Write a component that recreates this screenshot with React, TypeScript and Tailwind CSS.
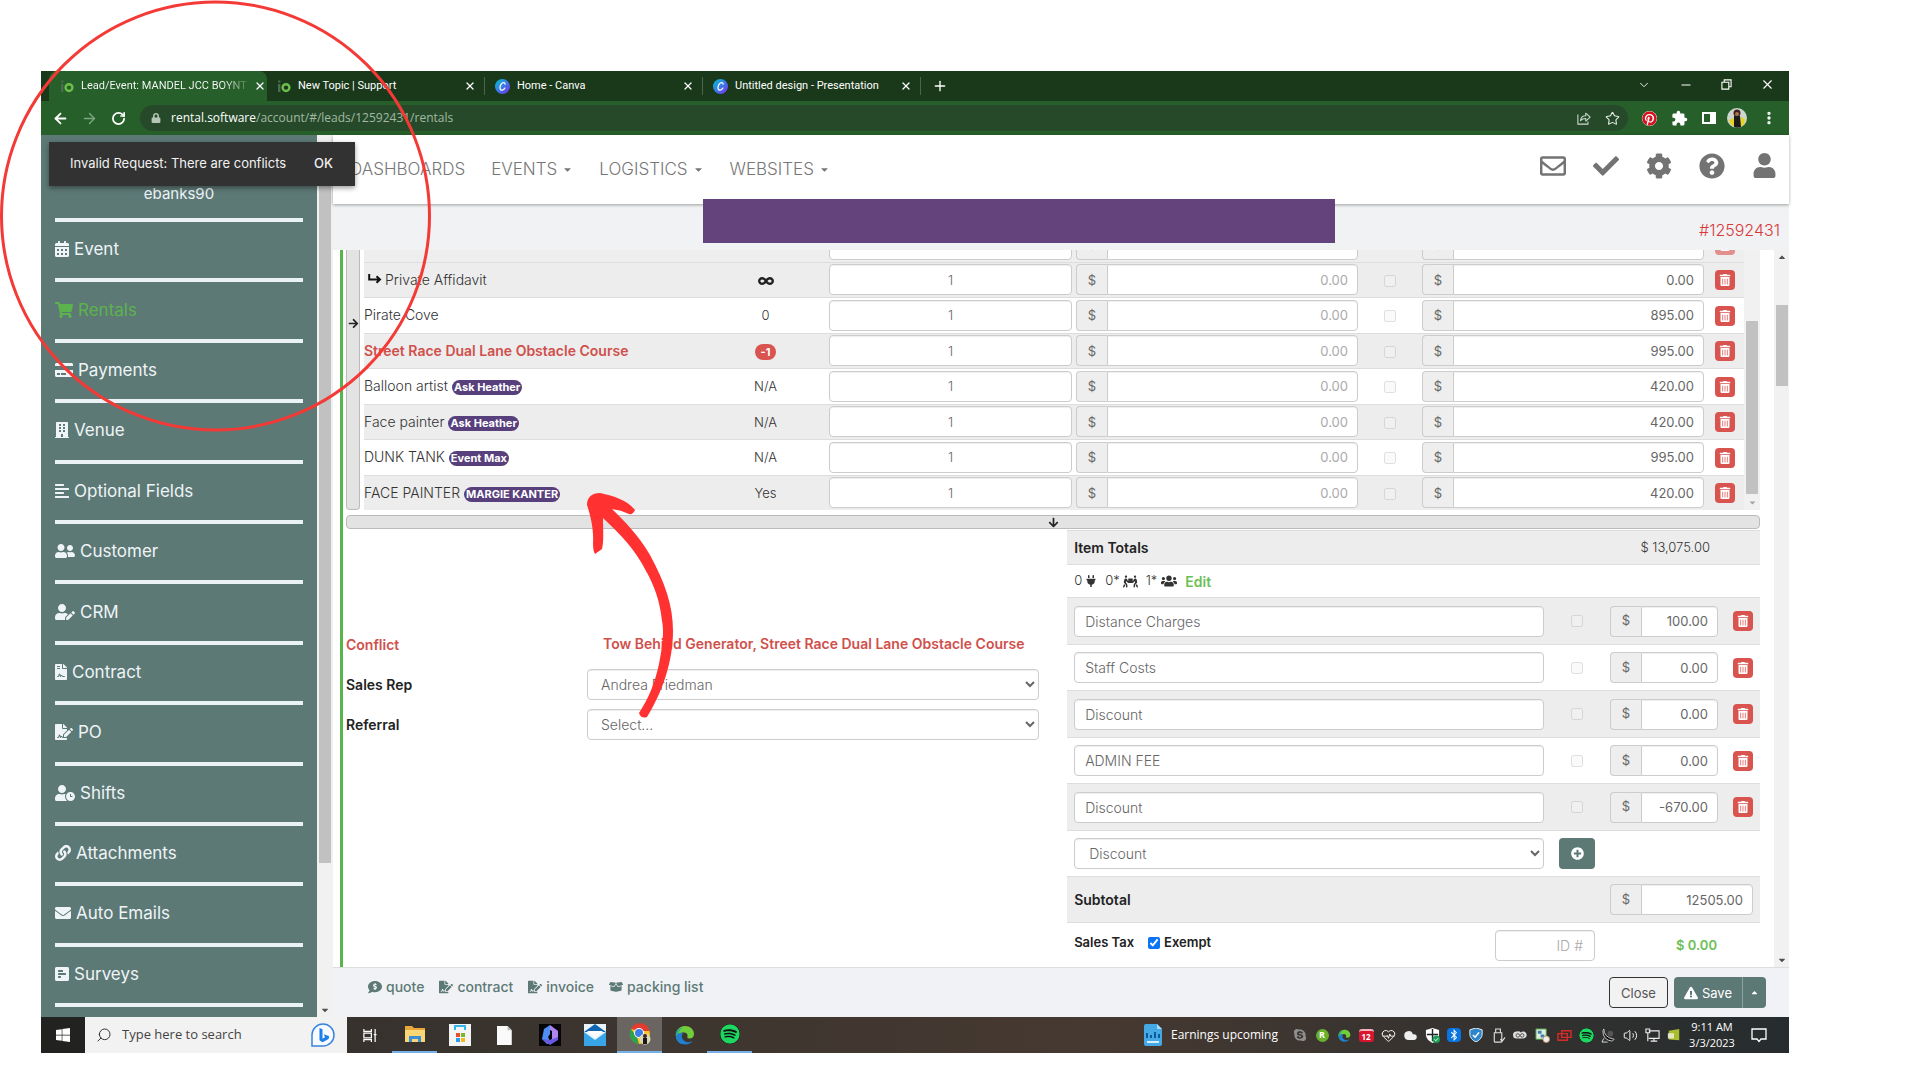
import React from "react";
import {
  FaAlignLeft, FaArrowDown, FaArrowRight, FaBoxOpen, FaBuilding, FaCalendarAlt, FaCaretDown, FaCaretUp, FaCheck, FaCog,
  FaCommentDollar, FaCreditCard, FaEnvelope, FaExclamationTriangle, FaFileContract, FaFileSignature, FaInfinity, FaLink,
  FaPeopleCarry, FaPlug, FaPlusCircle, FaPollH, FaPuzzlePiece, FaQuestionCircle, FaRegEnvelope, FaShoppingCart,
  FaSpotify, FaTrashAlt, FaUser, FaUserClock, FaUserEdit, FaUserFriends, FaUsers, FaPinterest, FaSkype, FaBluetoothB,
  FaWindows, FaLock,
} from "react-icons/fa";
import { ArrowLeft, ArrowRight, RotateCw, Search, Star, X, Plus, Minus, ChevronDown, EllipsisVertical, HeartPulse, Cloud, Volume2 } from "lucide-react";

const field = "h-[31px] w-full min-w-0 border border-[#ccc] bg-white text-[#666] shadow-[inset_0_1px_1px_rgba(0,0,0,0.07)] outline-none placeholder:text-[#aaa]";

/* ---------- browser chrome ---------- */

function IoLogo() {
  return (
    <svg viewBox="0 0 14 14" className="size-[14px] shrink-0">
      <rect x="1" y="5" width="2.4" height="8" fill="#4d6b50" />
      <rect x="1" y="1.5" width="2.4" height="2" fill="#4d6b50" />
      <circle cx="9" cy="8.6" r="3.4" fill="none" stroke="#6cc04a" strokeWidth="2.4" />
    </svg>
  );
}

function CanvaLogo() {
  return (
    <svg viewBox="0 0 16 16" className="size-[15px] shrink-0">
      <defs>
        <linearGradient id="canva" x1="0" y1="0" x2="1" y2="1">
          <stop offset="0" stopColor="#00c4cc" />
          <stop offset="0.5" stopColor="#3a7be8" />
          <stop offset="1" stopColor="#7d2ae8" />
        </linearGradient>
      </defs>
      <circle cx="8" cy="8" r="8" fill="url(#canva)" />
      <path d="M10.8 5.6c0-1-.6-1.7-1.6-1.7C7 3.900 5.300 6.800 5.300 9.200c0 1.700.9 2.700 2.200 2.700 1.400 0 2.500-1 3.100-2.200" fill="none" stroke="#fff" strokeWidth="1.300" strokeLinecap="round" />
    </svg>
  );
}

const tabs = [
  { title: "Lead/Event: MANDEL JCC BOYNT", icon: <IoLogo />, active: true },
  { title: "New Topic | Support", icon: <IoLogo /> },
  { title: "Home - Canva", icon: <CanvaLogo /> },
  { title: "Untitled design - Presentation", icon: <CanvaLogo /> },
];

function Browser() {
  return (
    <header className="shrink-0 font-['Open_Sans',sans-serif] text-white">
      <div className="flex h-[30px] items-stretch bg-[#1a391b] pl-[8px]">
        {tabs.map((t) => (
          <div
            key={t.title}
            className={
              t.active
                ? "flex w-[218px] items-center gap-[7px] rounded-t-lg bg-[#265f2a] pr-[8px] pl-[11px]"
                : "my-[6px] flex w-[218px] items-center gap-[7px] border-r border-[#4b654c] pr-[8px] pl-[10px]"
            }
          >
            {t.icon}
            <span className={"flex-1 font-[Roboto,sans-serif] text-[11px] whitespace-nowrap " + (t.active ? "bg-linear-to-r from-white from-85% to-[#4e7f51] bg-clip-text text-transparent" : "")}>{t.title}</span>
            <button aria-label={"Close " + t.title}><X size={12} strokeWidth={2.500} /></button>
          </div>
        ))}
        <button aria-label="New tab" className="ml-[11px]"><Plus size={16} /></button>
        <div className="ml-auto flex items-center gap-[28px] pr-[14px] pb-[3px]">
          <button aria-label="Search tabs"><ChevronDown size={14} strokeWidth={1.500} /></button>
          <button aria-label="Minimize"><Minus size={14} strokeWidth={2} /></button>
          <button aria-label="Restore">
            <svg viewBox="0 0 12 12" className="size-[11px]"><path d="M1 3.500h7.500V11H1zM3.500 3.500V1H11v7.500H8.500" fill="none" stroke="#fff" strokeWidth="1.200" /></svg>
          </button>
          <button aria-label="Close window"><X size={15} strokeWidth={1.750} /></button>
        </div>
      </div>
      <div className="flex h-[34px] items-center bg-[#265f2a] pr-[12px] pl-[11px]">
        <button aria-label="Back"><ArrowLeft size={17} strokeWidth={2.500} /></button>
        <button aria-label="Forward" className="ml-[12px] text-[#7ea480]"><ArrowRight size={17} strokeWidth={2} /></button>
        <button aria-label="Reload" className="ml-[13px]"><RotateCw size={15} strokeWidth={2.750} /></button>
        <div className="ml-[14px] flex h-[26px] flex-1 items-center rounded-full bg-[#264a29] pr-[8px] pl-[11px] text-[12px]">
          <FaLock size={10} className="text-[#b5c5b6]" />
          <span className="ml-[10px]">rental.software<span className="text-[#a3b8a4]">/account/#/leads/12592431/rentals</span></span>
          <svg viewBox="0 0 16 16" className="ml-auto size-[14px]">
            <path d="M1 4v11h11.500v-3M4 11c.5-4 3-5.500 6-5.500V2.500L15 7l-5 4.500v-3C7.500 8.500 5.500 9 4 11z" fill="none" stroke="#cfdacf" strokeWidth="1.200" strokeLinejoin="round" />
          </svg>
          <Star size={15} strokeWidth={1.750} className="ml-[14px] text-[#e4ece4]" />
        </div>
        <div className="ml-[14px] flex items-center gap-[14px]">
          <FaPinterest size={15} className="rounded-full bg-white text-[#d5121f]" />
          <svg viewBox="0 0 24 24" className="size-[17px]">
            <path d="M20.500 11H19V7a2 2 0 0 0-2-2h-4V3.500a2.500 2.500 0 0 0-5 0V5H4a2 2 0 0 0-2 2v3.800h1.500a2.700 2.700 0 0 1 0 5.400H2V20a2 2 0 0 0 2 2h3.800v-1.500a2.700 2.700 0 0 1 5.400 0V22H17a2 2 0 0 0 2-2v-4h1.500a2.500 2.500 0 0 0 0-5z" fill="#fff" />
          </svg>
          <svg viewBox="0 0 14 14" className="size-[14px]"><path d="M0 1h14v12H0zM2 3v8h6V3z" fill="#fff" fillRule="evenodd" /></svg>
          <svg viewBox="0 0 20 20" className="-ml-[3px] size-[20px]">
            <circle cx="10" cy="10" r="10" fill="#cfd6d0" />
            <path d="M2 12l5-2 3 9c-4 0-7-3-8-7zM14 9l4 2c0 4-2 7-5 8z" fill="#e6d41f" />
            <path d="M7 8h6l1 11c-3 1-5 1-7 0z" fill="#1c1a1a" />
            <circle cx="10" cy="5" r="3.500" fill="#3b2119" />
            <circle cx="10" cy="6" r="2" fill="#b0704f" />
          </svg>
          <button aria-label="Menu"><EllipsisVertical size={16} strokeWidth={3} /></button>
        </div>
      </div>
    </header>
  );
}

/* ---------- sidebar ---------- */

const menu = [
  { label: "Event", Icon: FaCalendarAlt, size: "w-[14px]" },
  { label: "Rentals", Icon: FaShoppingCart, size: "w-[18px]", active: true },
  { label: "Payments", Icon: FaCreditCard, size: "w-[18px]" },
  { label: "Venue", Icon: FaBuilding, size: "w-[14px]" },
  { label: "Optional Fields", Icon: FaAlignLeft, size: "w-[14px]" },
  { label: "Customer", Icon: FaUserFriends, size: "w-[20px]" },
  { label: "CRM", Icon: FaUserEdit, size: "w-[20px]" },
  { label: "Contract", Icon: FaFileContract, size: "w-[12px]" },
  { label: "PO", Icon: FaFileSignature, size: "w-[18px]" },
  { label: "Shifts", Icon: FaUserClock, size: "w-[20px]" },
  { label: "Attachments", Icon: FaLink, size: "w-[16px]" },
  { label: "Auto Emails", Icon: FaEnvelope, size: "w-[16px]" },
  { label: "Surveys", Icon: FaPollH, size: "w-[14px]" },
];

function Sidebar() {
  return (
    <aside className="flex w-[292px] shrink-0 bg-[#5d7975] text-[#eef4f7]">
      <div className="flex flex-1 flex-col px-[14px] pb-[10px]">
        <div className="flex h-[87px] items-end justify-center border-b-4 border-[#eaf2f6] pb-[14px] text-[15px] leading-[20px]">ebanks90</div>
        <nav className="flex flex-1 flex-col">
          {menu.map(({ label, Icon, size, active }) => (
            <a
              key={label}
              href={"#" + label}
              className={
                "flex flex-1 items-center gap-[5px] border-b-4 border-[#eaf2f6] pb-[2px] text-[17px] leading-[20px] " + (active ? "text-[#5cb34d]" : "")
              }
            >
              <Icon className={"h-[18px] shrink-0 " + size} />
              {label}
            </a>
          ))}
        </nav>
      </div>
      <div className="flex w-[16px] flex-col items-center bg-[#f1f1f1] pt-[17px] text-[#505050]">
        <div className="w-[12px] flex-[708] bg-[#c1c1c1]" />
        <div className="flex-[142]" />
        <FaCaretDown size={10} className="mb-[2px]" />
      </div>
    </aside>
  );
}

/* ---------- rentals ---------- */

function TrashButton() {
  return (
    <button aria-label="Remove" className="inline-flex size-[20px] items-center justify-center rounded-[4px] bg-[#d9534f] align-middle text-white">
      <FaTrashAlt size={12} />
    </button>
  );
}

function Money({ label, value, placeholder }: { label: string; value?: string; placeholder?: string }) {
  return (
    <div className="flex w-full">
      <span className="flex h-[31px] w-[31px] shrink-0 items-center justify-center rounded-l-[4px] border border-r-0 border-[#ccc] bg-[#eee] text-[13px] text-[#666]">$</span>
      <input aria-label={label} defaultValue={value} placeholder={placeholder} className={field + " rounded-r-[4px] px-[9px] text-right text-[13px]"} />
    </div>
  );
}

const rentals = [
  { name: "", avail: "" },
  { name: "Private Affidavit", avail: "inf", total: "0.00", child: true },
  { name: "Pirate Cove", avail: "0", total: "895.00" },
  { name: "Street Race Dual Lane Obstacle Course", avail: "-1", total: "995.00", conflict: true },
  { name: "Balloon artist", tag: "Ask Heather", avail: "N/A", total: "420.00" },
  { name: "Face painter", tag: "Ask Heather", avail: "N/A", total: "420.00" },
  { name: "DUNK TANK", tag: "Event Max", avail: "N/A", total: "995.00" },
  { name: "FACE PAINTER", tag: "MARGIE KANTER", avail: "Yes", total: "420.00" },
];

function RentalTable() {
  return (
    <div className="flex h-[260px] gap-[4px]">
      <div className="flex w-[14px] items-center justify-center rounded-b-[4px] border border-t-0 border-[#bbb] bg-[#e3e3e3] pb-[113px] text-[#222]">
        <FaArrowRight size={11} className="shrink-0" />
      </div>
      <div className="flex min-w-0 flex-1 flex-col justify-end overflow-hidden">
        <table className="h-[284px] w-full shrink-0 table-fixed border-collapse text-[14px] leading-[20px] text-[#333]">
          <colgroup>
            <col />
            <col className="w-[119px]" />
            <col className="w-[247px]" />
            <col className="w-[286px]" />
            <col className="w-[60px]" />
            <col className="w-[286px]" />
            <col className="w-[38px]" />
          </colgroup>
          <tbody>
            {rentals.map((r, i) => (
              <tr key={r.name + i} className={"border-t border-[#ddd] " + (i === 0 ? "bg-[#eee] [&_button]:opacity-60" : i % 2 ? "bg-[#ededed]" : "bg-white")}>
                <td className={r.conflict ? "p-0 font-semibold whitespace-nowrap text-[#d0504c]" : "p-0 font-light whitespace-nowrap"}>
                  {r.child && (
                    <svg viewBox="0 0 14 10" className="mr-[3px] ml-[4px] inline h-[10px] w-[14px] align-[1px]">
                      <path d="M1.200 0v5.500h10.500M8.500 2.200l3.500 3.300-3.500 3.300" fill="none" stroke="#111" strokeWidth="2" />
                    </svg>
                  )}
                  {r.name}
                  {r.tag && (
                    <span className="ml-[4px] inline-block rounded-full bg-[#58407c] px-[2px] text-[11px] leading-[15px] font-bold text-white">{r.tag}</span>
                  )}
                </td>
                <td className="py-0 pr-[4px] pl-0 text-center text-[13px] font-light">
                  {r.avail === "inf" ? (
                    <FaInfinity size={16} className="inline text-[#222]" />
                  ) : r.conflict ? (
                    <span className="inline-block rounded-full bg-[#d9534f] px-[6px] text-[11px] leading-[16px] font-bold text-white">{r.avail}</span>
                  ) : (
                    r.avail
                  )}
                </td>
                <td className="px-[2px] py-0"><input aria-label="Quantity" defaultValue={i > 0 ? "1" : ""} className={field + " block rounded-[4px] text-center text-[13px] font-light"} /></td>
                <td className="px-[2px] py-0"><Money label="Override" placeholder={i > 0 ? "0.00" : ""} /></td>
                <td className="p-0 text-center">{i > 0 && <input type="checkbox" disabled aria-label="Lock price" className="size-[12px] align-middle opacity-70" />}</td>
                <td className="px-[2px] py-0"><Money label="Total" value={r.total} /></td>
                <td className="p-0 text-center"><TrashButton /></td>
              </tr>
            ))}
          </tbody>
        </table>
      </div>
      <div className="-ml-[4px] flex w-[16px] flex-col items-center bg-[#f1f1f1] pt-[71px] text-[#a3a3a3]">
        <div className="w-[12px] flex-1 bg-[#c1c1c1]" />
        <FaCaretDown size={9} className="mt-[4px] mb-[3px]" />
      </div>
    </div>
  );
}

const fees = [
  { name: "Distance Charges", amount: "100.00" },
  { name: "Staff Costs", amount: "0.00" },
  { name: "Discount", amount: "0.00" },
  { name: "ADMIN FEE", amount: "0.00" },
  { name: "Discount", amount: "-670.00" },
];

function Totals() {
  return (
    <section className="text-[14px] text-[#333]">
      <div className="flex h-[35px] items-center justify-between border-y border-[#ddd] bg-[#ededed] pr-[50px] pl-[7px]">
        <b className="font-semibold text-[#222]">Item Totals</b>
        <span className="text-[13px] font-light">$ 13,075.00</span>
      </div>
      <div className="flex h-[32px] items-center gap-[8px] pl-[7px] text-[13px] font-light">
        <span className="flex items-center gap-[3px]">0<FaPlug size={12} /></span>
        <span className="flex items-center gap-[3px]">0*<FaPeopleCarry size={15} /></span>
        <span className="flex items-center gap-[4px]">1*<FaUsers size={16} /></span>
        <a href="#edit" className="text-[14px] font-semibold text-[#6cbf56]">Edit</a>
      </div>
      {fees.map((f, i) => (
        <div key={i} className={"flex items-center border-t border-[#ddd] px-[7px] " + (i % 2 ? "h-[46px]" : "h-[47px] bg-[#ededed]")}>
          <input aria-label="Charge name" defaultValue={f.name} className={field + " flex-1 rounded-[4px] px-[10px] text-[14px] font-light"} />
          <div className="flex w-[66px] justify-center">
            <input type="checkbox" disabled aria-label="Taxable" className="size-[12px] opacity-70" />
          </div>
          <div className="w-[108px]"><Money label="Amount" value={f.amount} /></div>
          <div className="flex w-[35px] justify-end"><TrashButton /></div>
        </div>
      ))}
      <div className="flex h-[46px] items-center border-t border-[#ddd] pr-[165px] pl-[7px]">
        <select aria-label="Charge type" className={field + " flex-1 rounded-[4px] px-[10px] text-[14px] font-light"}>
          <option>Discount</option>
        </select>
        <button aria-label="Add charge" className="ml-[15px] flex h-[31px] w-[36px] items-center justify-center rounded-[4px] bg-[#5d7975] text-white">
          <FaPlusCircle size={13} />
        </button>
      </div>
      <div className="flex h-[47px] items-center justify-between border-y border-[#ddd] bg-[#ededed] px-[7px]">
        <b className="font-semibold text-[#222]">Subtotal</b>
        <div className="w-[143px]"><Money label="Subtotal" value="12505.00" /></div>
      </div>
      <div className="flex items-center pt-[7px] pl-[7px] font-semibold text-[#222]">
        <div className="flex items-center gap-[14px] pb-[5px] text-[13px]">
          Sales Tax
          <label className="flex items-center gap-[4px]">
            <input type="checkbox" defaultChecked className="size-[12px] accent-[#0b73f5]" />
            Exempt
          </label>
        </div>
        <input aria-label="Tax ID" placeholder="ID #" className={field + " ml-auto max-w-[100px] rounded-[4px] px-[11px] text-right font-light"} />
        <span className="w-[165px] pr-[43px] text-right text-[13px] text-[#6cbf56]">$ 0.00</span>
      </div>
    </section>
  );
}

function Details() {
  const row = "flex h-[30px] items-center";
  const label = "w-[241px] shrink-0 pt-[2px] font-semibold";
  return (
    <section className="flex flex-col gap-[10px] pt-[99px] pr-[28px] text-[14px] leading-[20px] text-[#222]">
      <div className={row + " text-[#d0504c]"}>
        <span className={label}>Conflict</span>
        <span className="pl-[16px] font-semibold whitespace-nowrap">Tow Behind Generator, Street Race Dual Lane Obstacle Course</span>
      </div>
      <div className={row}>
        <label htmlFor="rep" className={label}>Sales Rep</label>
        <select id="rep" className={field + " rounded-[4px] px-[9px] font-light"}><option>Andrea Friedman</option></select>
      </div>
      <div className={row}>
        <label htmlFor="referral" className={label}>Referral</label>
        <select id="referral" className={field + " rounded-[4px] px-[9px] font-light"}><option>Select...</option></select>
      </div>
    </section>
  );
}

function Main() {
  const docs = [
    { label: "quote", Icon: FaCommentDollar },
    { label: "contract", Icon: FaFileSignature },
    { label: "invoice", Icon: FaFileSignature },
    { label: "packing list", Icon: FaBoxOpen },
  ];
  return (
    <div className="flex min-w-0 flex-1 flex-col bg-white">
      <div className="relative z-10 flex h-[69px] shrink-0 items-center bg-white pr-[12px] pl-[17px] text-[17px] font-light text-[#777] shadow-[0_1px_3px_rgba(0,0,0,0.35)]">
        <nav className="flex gap-[26px]">
          <a href="#dashboards">DASHBOARDS</a>
          {["EVENTS", "LOGISTICS", "WEBSITES"].map((n) => (
            <a key={n} href={"#" + n} className="flex items-center gap-[5px]">{n}<FaCaretDown size={11} /></a>
          ))}
        </nav>
        <div className="ml-auto flex items-center gap-[27px] pb-[8px] text-[#737373]">
          <FaRegEnvelope size={26} /><FaCheck size={26} /><FaCog size={26} /><FaQuestionCircle size={26} /><FaUser size={25} />
        </div>
      </div>
      <div className="relative flex h-[46px] shrink-0 items-center justify-end bg-[#f0f2f4] pt-[5px] pr-[9px] text-[16px] font-light text-[#d83a3a]">
        <div className="absolute -top-[5px] left-[370px] z-20 h-[44px] w-[632px] bg-[#64437c]" />
        #12592431
      </div>
      <div className="flex min-h-0 flex-1">
        <div className="ml-[7px] flex min-w-0 flex-1 flex-col overflow-hidden border-l-[3px] border-[#58b54c] pr-[14px] pl-[3px]">
          <RentalTable />
          <div className="mt-[5px] flex h-[14px] shrink-0 items-center justify-center rounded-[4px] border border-[#bbb] bg-[#e3e3e3] text-[#222]">
            <FaArrowDown size={11} />
          </div>
          <div className="mt-[1px] grid grid-cols-[51fr_49fr]">
            <Details />
            <Totals />
          </div>
        </div>
        <div className="flex w-[15px] flex-col items-center bg-[#f1f1f1] pt-[2px] text-[#505050]">
          <FaCaretUp size={10} />
          <div className="mt-[43px] h-[81px] w-[12px] bg-[#c1c1c1]" />
          <FaCaretDown size={10} className="mt-auto mb-[2px]" />
        </div>
      </div>
      <footer className="flex h-[50px] shrink-0 items-start border-t border-[#ddd] bg-[#f0f2f5] pt-[9px] pr-[23px] pl-[35px] text-[14px] leading-[20px]">
        <div className="flex gap-[15px] font-medium text-[#5d7975]">
          {docs.map(({ label, Icon }) => (
            <a key={label} href={"#" + label} className="flex items-center gap-[4px]"><Icon size={14} />{label}</a>
          ))}
        </div>
        <button className="ml-auto h-[31px] rounded-[4px] border border-[#333] bg-[#f2f2f2] px-[11px] text-[13px] text-[#555]">Close</button>
        <div className="ml-[6px] flex h-[31px] rounded-[4px] bg-[#5d7975] text-[13px] text-white">
          <button className="flex items-center gap-[4px] border-r border-[#8ea39f] px-[10px]"><FaExclamationTriangle size={14} />Save</button>
          <button aria-label="More save options" className="px-[7px]"><FaCaretUp size={9} /></button>
        </div>
      </footer>
    </div>
  );
}

/* ---------- taskbar ---------- */

function EdgeLogo({ className }: { className: string }) {
  return (
    <svg viewBox="0 0 20 20" className={className}>
      <path d="M1 12C0 6 4 1 10 1c5 0 9 3.500 9 8 0 3-2 4.500-4.500 4.500-2 0-2.500-1-2-2C13 9.500 11.500 7.500 9 7.500 5.500 7.500 2 9 1 12z" fill="#6fce3a" />
      <path d="M1 12C0 6 4 2.500 8 3 5 4 3 7 3 11c0 4 3 7.500 7 8-5 .5-8.500-3-9-7z" fill="#2aa7a0" />
      <path d="M1 12c1-3 4.500-4.500 8-4.500-3 1.500-3 6 .5 8.500 2.500 1.800 6 1.500 8.500-.5-1.500 2.500-4.500 4-8 4-4.500 0-8.500-3-9-7.500z" fill="#1f7fd0" />
    </svg>
  );
}

function Taskbar() {
  const app = "flex h-full w-[45px] items-center justify-center";
  return (
    <footer className="flex h-[36px] shrink-0 items-center bg-gradient-to-r from-[#302f2c] via-[#463931] via-60% to-[#262c2e] font-['Open_Sans',sans-serif] text-[12px] text-white">
      <button aria-label="Start" className="flex h-full w-[44px] items-center justify-center bg-[#222220]"><FaWindows size={16} /></button>
      <label className="flex h-full w-[262px] items-center bg-[#f2f2f2] pr-[11px] pl-[11px] text-[#333]">
        <Search size={16} strokeWidth={1.500} className="-scale-x-100" />
        <input aria-label="Search" placeholder="Type here to search" className="ml-[10px] min-w-0 flex-1 text-[13px] outline-none placeholder:text-[#444]" />
        <svg viewBox="0 0 26 26" className="size-[26px]">
          <path d="M2 24V13A11 11 0 1 1 13 24z" fill="#f7fbff" stroke="#3a83dd" strokeWidth="1.500" />
          <path d="M9.500 6l3 1.200v9.500l2.500-1.500-1.200-3 5 1.800c1 2.500-1 3.500-2 4l-4.300 2.200-3-2z" fill="#1a7fe8" />
        </svg>
      </label>
      <div className="flex h-full">
        <div className={app}>
          <svg viewBox="0 0 16 16" className="size-[15px]"><path d="M2 1v2.500h8V1M2 15v-2.500h8V15M2 5.500h8v5H2zM14 1v14M12.500 7h3" fill="none" stroke="#fff" strokeWidth="1.300" /></svg>
        </div>
        <div className={app + " border-b-2 border-[#76b0e6]"}>
          <svg viewBox="0 0 20 18" className="w-[20px]"><path d="M0 1h7l2 2h11v14H0z" fill="#e8a83a" /><path d="M0 5h20v12H0z" fill="#fbd675" /><path d="M4 17v-6h12v6h-3v-3H7v3z" fill="#3b8ed6" /></svg>
        </div>
        <div className={app}>
          <svg viewBox="0 0 22 22" className="size-[22px]"><path d="M0 0h22v22H0z" fill="#f4f4f4" /><path d="M6 6V2h10v4" fill="none" stroke="#34b5e8" strokeWidth="2" /><path d="M7 9h4v4H7z" fill="#e8502c" /><path d="M12 9h4v4h-4z" fill="#7cb82f" /><path d="M7 14h4v4H7z" fill="#2c9be8" /><path d="M12 14h4v4h-4z" fill="#f8b71c" /></svg>
        </div>
        <div className={app}>
          <svg viewBox="0 0 14 18" className="h-[19px]"><path d="M0 0h10l4 4v14H0z" fill="#fafafa" /><path d="M10 0v4h4z" fill="#bbb" /></svg>
        </div>
        <div className={app}>
          <svg viewBox="0 0 22 22" className="size-[22px]"><path d="M0 0h22v22H0z" fill="#050509" /><path d="M5 5l6-4v9l-2 3 2 4-3 3-5-5z" fill="#4f8ff5" /><path d="M11 1l8 6v7l-8 6-4-1 6-4V7l-2-1z" fill="#b084f0" /><path d="M3 15l8 1 8-3v3l-8 5z" fill="#6a58e0" /></svg>
        </div>
        <div className={app}>
          <svg viewBox="0 0 22 22" className="size-[22px]"><path d="M0 0h22v22H0z" fill="#e8f3fb" /><path d="M0 8l11-8 11 8z" fill="#1066b0" /><path d="M0 8l11 8 11-8v14H0z" fill="#37a5e8" /><path d="M3 7h16l-8 7z" fill="#fff" /></svg>
        </div>
        <div className={app + " border-b-2 border-[#76b0e6] bg-[#6a6561]"}>
          <svg viewBox="0 0 22 22" className="size-[22px]"><circle cx="11" cy="11" r="10" fill="#f9c52a" /><path d="M2 6a10 10 0 0 1 18 0l.5 2H11z" fill="#e33b2e" /><path d="M2 6l6 8 2 7A10 10 0 0 1 2 6z" fill="#2da14c" /><circle cx="10" cy="10" r="5" fill="#fff" /><circle cx="10" cy="10" r="4" fill="#3c7ee8" /><circle cx="16" cy="16" r="5.500" fill="#d8d9b8" /><path d="M14 15h4v6h-4z" fill="#1b1717" /><circle cx="16" cy="13" r="2" fill="#3b2119" /></svg>
        </div>
        <div className={app}><EdgeLogo className="size-[20px]" /></div>
        <div className={app + " border-b-2 border-[#76b0e6]"}><FaSpotify size={20} className="rounded-full bg-[#111] text-[#1ed760]" /></div>
      </div>
      <div className="ml-auto flex items-center">
        <svg viewBox="0 0 18 22" className="mr-[9px] h-[22px]"><path d="M0 2q0-2 2-2h11l5 5v15q0 2-2 2H2q-2 0-2-2z" fill="#45a9e6" /><path d="M13 0v5h5z" fill="#a6dcfa" /><path d="M3 14V9m4 5v-3m4 3V8m4 6v-4" stroke="#0b5b9c" strokeWidth="2" /><path d="M3 18h12" stroke="#d7effc" strokeWidth="2" /></svg>
        <span className="mr-[11px]">Earnings upcoming</span>
      </div>
      <div className="grid grid-cols-[repeat(18,22px)] items-center [&>*]:mx-auto">
        <FaSkype size={14} className="text-[#8f8f8f]" />
        <span className="flex size-[13px] items-center justify-center rounded-full bg-[#69b02d] text-[9px] font-bold">R</span>
        <EdgeLogo className="size-[13px]" />
        <span className="flex h-[13px] w-[15px] items-end justify-center rounded-[3px] border-t-2 border-[#f3b5bd] bg-[#d8142f] text-[8px] leading-[11px] font-bold">12</span>
        <HeartPulse size={15} strokeWidth={1.500} />
        <Cloud size={15} fill="#eee" strokeWidth={0} />
        <svg viewBox="0 0 16 16" className="size-[15px]"><path d="M8 0l7 2v5c0 4-3 7-7 9-4-2-7-5-7-9V2z" fill="#fff" /><path d="M8 1v13M2 7h12" stroke="#222" strokeWidth="1.500" /><circle cx="12" cy="12" r="4" fill="#1fa05a" /><path d="M10 12l1.500 1.500L14 11" fill="none" stroke="#fff" /></svg>
        <FaBluetoothB size={14} className="rounded-[4px] bg-[#0a74e0] p-[1px]" />
        <svg viewBox="0 0 16 16" className="size-[14px]"><path d="M8 0l7 2v5c0 4-3 7-7 9-4-2-7-5-7-9V2z" fill="#2d86cc" stroke="#fff" /><path d="M4.500 8L7 10.500 11.500 5" fill="none" stroke="#fff" strokeWidth="1.800" /></svg>
        <svg viewBox="0 0 16 16" className="size-[15px]"><path d="M5 5V1h5v4M3.500 5h8v9q0 1-1 1h-6q-1 0-1-1zM10 12l2 2 3-4" fill="none" stroke="#ddd" strokeWidth="1.200" /></svg>
        <svg viewBox="0 0 16 16" className="size-[14px]"><path d="M4 4a4 4 0 0 0 0 8h8a4 4 0 1 0-3-7q-2-2-5-1z" fill="#ddd" /><circle cx="5.500" cy="8.500" r="2" fill="none" stroke="#444" /><circle cx="10.500" cy="8.500" r="2" fill="none" stroke="#444" /></svg>
        <svg viewBox="0 0 16 16" className="size-[15px]"><path d="M1 1h11v11H1z" fill="#dff0da" stroke="#4c9a42" /><path d="M3 3h4v3H3zM6 7h4v3H6z" fill="#3e7fb8" /><circle cx="12" cy="12" r="3.500" fill="#eee" stroke="#b98f66" /></svg>
        <svg viewBox="0 0 16 16" className="size-[15px]"><path d="M5 3h10v7H5zM1 6h10v7H1z" fill="#3a302b" stroke="#d62b2b" strokeWidth="1.500" /></svg>
        <FaSpotify size={15} className="rounded-full bg-[#111] text-[#1ed760]" />
        <svg viewBox="0 0 16 16" className="size-[15px]"><path d="M3 1q0 9 11 11l-2 2Q2 13 2 3z" fill="#111" stroke="#ccc" /><circle cx="10" cy="6" r="3" fill="#555" /><path d="M3 11l-2 4h6" stroke="#ddd" fill="none" /></svg>
        <Volume2 size={15} strokeWidth={1.500} />
        <svg viewBox="0 0 16 16" className="size-[15px]"><path d="M4 3h11v8H4M9.500 11v3M6 14h7M1 1h4v4H1zM3 5v9" fill="none" stroke="#eee" strokeWidth="1.200" /></svg>
        <svg viewBox="0 0 16 16" className="size-[14px]"><path d="M2 3l12-2v13L2 13z" fill="#a9bd2e" /><path d="M1 6h7v6H1z" fill="#e3e8c0" /></svg>
      </div>
      <div className="w-[54px] text-center text-[11px] leading-[16px]"><div>9:11 AM</div><div>3/3/2023</div></div>
      <button aria-label="Notifications" className="mr-[22px] ml-[12px]">
        <svg viewBox="0 0 16 16" className="size-[16px]"><path d="M1 2h14v10h-5l-2 2.500L6 12H1z" fill="none" stroke="#fff" strokeWidth="1.300" /></svg>
      </button>
    </footer>
  );
}

export default function App() {
  return (
    <div className="relative h-screen w-full overflow-hidden bg-white pt-[71px] pr-[131px] pb-[27px] pl-[41px] font-['Inter',sans-serif]">
      <div className="flex h-full flex-col">
        <Browser />
        <div className="flex min-h-0 flex-1">
          <Sidebar />
          <Main />
        </div>
        <Taskbar />
      </div>

      <div role="alert" className="absolute top-[142px] left-[49px] z-30 flex h-[44px] w-[306px] items-center justify-between bg-[#323232] pr-[22px] pl-[21px] text-[13px] text-[#f1f1f1] shadow-[0_2px_5px_rgba(0,0,0,0.4)]">
        <span>Invalid Request: There are conflicts</span>
        <button className="font-medium">OK</button>
      </div>

      <svg viewBox="0 0 720 740" className="pointer-events-none absolute top-0 left-0 z-40 h-[740px] w-[720px]">
        <circle cx="215.500" cy="216" r="214" fill="none" stroke="#f43a36" strokeWidth="3" />
        <path
          d="M587 505C587 497 592 493 600 493C614 496 627 500 635 510Q633 515 629 514Q621 510 612 509C624 521 638 534 650 555C665 583 673 605 673 631C673 662 662 693 647 717Q641 719 639 713C649 698 655 682 659 664C663 644 664 630 662 621C660 601 654 585 646 571C635 549 620 534 603 518C603 530 604 540 602 549L595 554Q593 551 593 543C594 529 590 514 587 505Z"
          fill="#ff3131"
        />
      </svg>
    </div>
  );
}
